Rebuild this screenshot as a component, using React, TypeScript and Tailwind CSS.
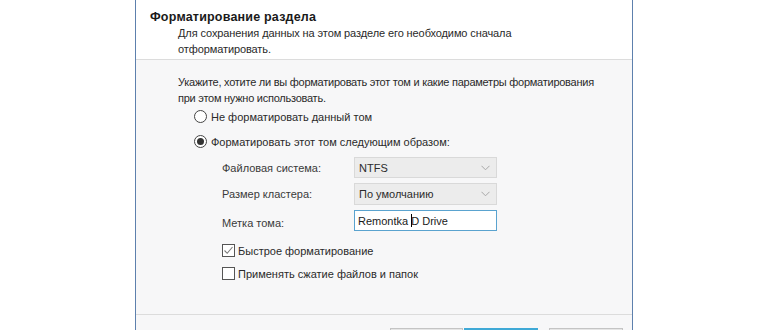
import React from 'react';

const font = { fontFamily: '"Liberation Sans", Arial, sans-serif' };

const Chevron: React.FC = () => (
  <svg width="9" height="6" viewBox="0 0 9 6" className="text-[#a8a8a8]">
    <path d="M0.5 0.8 L4.5 4.8 L8.5 0.8" fill="none" stroke="currentColor" strokeWidth="1" />
  </svg>
);

const Combo: React.FC<{ value: string; h: string }> = ({ value, h }) => (
  <div className={`flex w-[143px] ${h} items-center justify-between border border-[#d9d9d9] bg-[#ececec] pl-[4px] pr-[6px] text-[#2b2b2b]`}>
    <span>{value}</span>
    <Chevron />
  </div>
);

const Radio: React.FC<{ checked?: boolean; label: string }> = ({ checked, label }) => (
  <div className="flex h-[25px] items-center">
    <span className="flex h-[13px] w-[13px] items-center justify-center rounded-full border border-[#444] bg-white">
      {checked && <span className="h-[7px] w-[7px] rounded-full bg-[#333]" />}
    </span>
    <span className="ml-[4px]">{label}</span>
  </div>
);

const Check: React.FC<{ checked?: boolean; label: string }> = ({ checked, label }) => (
  <div className="flex h-[23px] items-center">
    <span className="flex h-[13px] w-[13px] items-center justify-center border border-[#555] bg-white">
      {checked && (
        <svg width="11" height="11" viewBox="0 0 11 11">
          <path d="M1.5 5.5 L4.2 8.3 L9.5 2" fill="none" stroke="#7a7a7a" strokeWidth="1.1" />
        </svg>
      )}
    </span>
    <span className="ml-[3px]">{label}</span>
  </div>
);

const App: React.FC = () => {
  return (
    <div className="h-[330px] w-[770px] overflow-hidden whitespace-nowrap bg-white text-[11px] leading-[16px] text-[#2a2a2a]" style={font}>
      <div className="ml-[135px] flex w-[498px] flex-col border-x border-[#5d80ad]">
        {/* header */}
        <div className="h-[59px] bg-white pt-[9px]">
          <div className="pl-[14px] text-[12.5px] font-bold tracking-[0.2px] text-[#1a1a1a]">Форматирование раздела</div>
          <div className="pl-[42px] tracking-[-0.1px]">
            Для сохранения данных на этом разделе его необходимо сначала
            <br />
            отформатировать.
          </div>
        </div>

        {/* body */}
        <div className="h-[256px] border-y border-[#dcdcdc] bg-[#f7f7f8] pt-[14px]">
          <div className="pl-[42px] tracking-[-0.25px]">
            Укажите, хотите ли вы форматировать этот том и какие параметры форматирования
            <br />
            при этом нужно использовать.
          </div>

          <div className="-mt-[2px] pl-[58px]">
            <Radio label="Не форматировать данный том" />
            <Radio checked label="Форматировать этот том следующим образом:" />
          </div>

          <div className="mt-[3px] grid grid-cols-[132px_143px] gap-y-[5px] pl-[86px] text-[#3a3a3a]">
            <div className="flex h-[21px] items-center">Файловая система:</div>
            <Combo value="NTFS" h="h-[21px]" />
            <div className="flex h-[22px] items-center">Размер кластера:</div>
            <Combo value="По умолчанию" h="h-[22px]" />
            <div className="flex h-[21px] items-end">Метка тома:</div>
            <div className="flex h-[21px] items-center border border-[#5aa3cf] bg-white pl-[3px] text-[#1a1a1a]">
              Remontka&nbsp;
              <span className="-mr-[1px] inline-block h-[13px] w-px bg-black" />
              D Drive
            </div>
          </div>

          <div className="mt-[8px] pl-[86px]">
            <Check checked label="Быстрое форматирование" />
            <Check label="Применять сжатие файлов и папок" />
          </div>
        </div>

        {/* footer */}
        <div className="flex h-[40px] bg-[#f7f7f8] pt-[13px]">
          <div className="ml-[254px] h-[23px] w-[73px] border border-[#c4c4c4] bg-[#e6e6e6]" />
          <div className="ml-[1px] h-[23px] w-[74px] border-2 border-[#3fa9d6] bg-[#e6e6e6]" />
          <div className="ml-[11px] h-[23px] w-[74px] border border-[#c4c4c4] bg-[#e6e6e6]" />
        </div>
      </div>
    </div>
  );
};

export default App;
